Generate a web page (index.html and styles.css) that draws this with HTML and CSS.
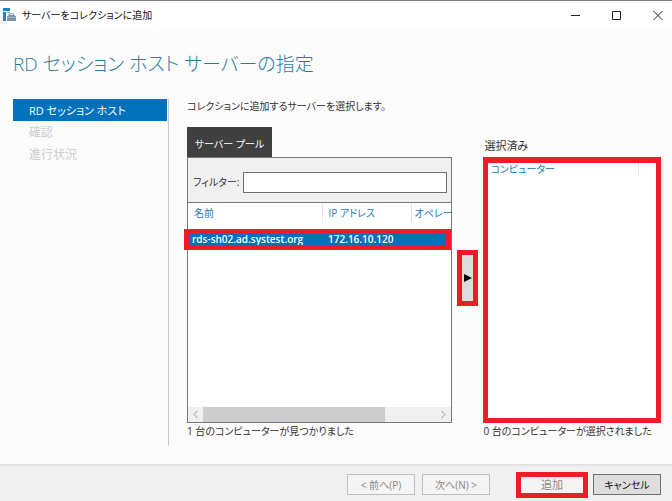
FILE: index.html
```html
<!DOCTYPE html>
<html lang="ja">
<head>
<meta charset="utf-8">
<meta name="viewport" content="width=device-width, initial-scale=1">
<title>サーバーをコレクションに追加</title>
<link rel="stylesheet" href="styles.css">
</head>
<body>
<div class="window">
  <header class="titlebar">
    <svg class="app-icon" viewBox="0 0 13 13" aria-hidden="true">
      <path d="M0 0h7v3H0zM0 4h3v9H0z" fill="#1583d0"/>
      <path d="M4 4h3v1H4z" fill="#7cbde8"/>
      <path d="M6 7.500Q6 5.500 8.500 5.500T11 7.500" fill="none" stroke="#7893a5"/>
      <path d="M4 8.500L6 7h5l2 1.500V13H4z" fill="#7893a5"/>
      <path d="M4 9.500h9" stroke="#c7d6df" stroke-width=".5"/>
    </svg>
    <span class="caption">サーバーをコレクションに追加</span>
    <div class="controls">
      <button class="control" type="button" aria-label="最小化"><svg viewBox="0 0 10 10"><path d="M0 5.500h9"/></svg></button>
      <button class="control" type="button" aria-label="最大化"><svg viewBox="0 0 10 10"><path d="M.5 1.500h8v8h-8z"/></svg></button>
      <button class="control" type="button" aria-label="閉じる"><svg viewBox="0 0 10 10"><path d="M.5 1l9 9M9.500 1l-9 9"/></svg></button>
    </div>
  </header>
  <h1 class="heading">RD セッション ホスト サーバーの指定</h1>
  <div class="content">
    <nav class="steps">
      <a class="step active" href="#host">RD セッション ホスト</a>
      <a class="step">確認</a>
      <a class="step">進行状況</a>
    </nav>
    <main class="page" id="host">
      <p class="instruction">コレクションに追加するサーバーを選択します。</p>
      <div class="picker">
        <section class="pool">
          <button class="tab" type="button">サーバー プール</button>
          <div class="panel">
            <div class="filter">
              <label for="filter">フィルター:</label>
              <input id="filter" type="text">
            </div>
            <div class="list">
              <table class="servers">
                <thead><tr><th class="name">名前</th><th class="ip">IP アドレス</th><th>オペレー</th></tr></thead>
                <tbody><tr><td>rds-sh02.ad.systest.org</td><td>172.16.10.120</td><td></td></tr></tbody>
              </table>
              <div class="row-mark"></div>
            </div>
            <div class="scrollbar">
              <svg viewBox="0 0 15 15"><path d="M9.500 4L6 7.500 9.500 11"/></svg>
              <div class="track"><div class="thumb"></div></div>
              <svg viewBox="0 0 15 15"><path d="M5.500 4L9 7.500 5.500 11"/></svg>
            </div>
          </div>
          <p class="status">1 台のコンピューターが見つかりました</p>
        </section>
        <div class="mover">
          <button class="move" type="button" aria-label="選択したサーバーを追加"><svg viewBox="0 0 8 8"><path d="M0 0l8 4-8 4z"/></svg></button>
        </div>
        <section class="chosen">
          <h2 class="chosen-title">選択済み</h2>
          <div class="chosen-list">
            <table class="computers"><thead><tr><th class="computer">コンピューター</th><th></th></tr></thead></table>
          </div>
          <p class="status">0 台のコンピューターが選択されました</p>
        </section>
      </div>
    </main>
  </div>
  <footer class="actions">
    <button class="btn" type="button" disabled>&lt; 前へ(P)</button>
    <button class="btn" type="button" disabled>次へ(N) &gt;</button>
    <div class="mark"><button class="btn add" type="button" disabled>追加</button></div>
    <button class="btn cancel" type="button">キャンセル</button>
  </footer>
</div>
</body>
</html>
```

FILE: styles.css
```css
* { box-sizing: border-box; }

body {
  margin: 0;
  background: #fcfcfc;
  color: #333;
  font: 10px/16px "Open Sans", "Noto Sans CJK JP", sans-serif;
  font-feature-settings: "palt";
}

button, input {
  margin: 0;
  padding: 0;
  font: inherit;
  font-feature-settings: inherit;
  border-radius: 0;
}

h1, h2, p { margin: 0; font-weight: 400; white-space: nowrap; }

.window {
  display: flex;
  flex-direction: column;
  min-height: 100vh;
  border-top: 1px solid #808080;
}

.titlebar {
  display: flex;
  align-items: center;
  height: 27px;
  padding-left: 3px;
  background: #fff;
  color: #111;
}

.app-icon { width: 13px; height: 13px; }
.caption { margin-left: 6px; white-space: nowrap; }
.controls { display: flex; margin-left: auto; height: 100%; }

.control {
  display: flex;
  align-items: center;
  justify-content: center;
  width: 41px;
  border: 0;
  background: none;
}

.control:last-child { width: 29px; }
.control:nth-child(2) { margin-right: 6px; }
.control svg { width: 10px; height: 10px; fill: none; stroke: #222; overflow: visible; }

.heading {
  height: 71px;
  padding: 19px 13px 0;
  color: #2b7d9f;
  font-size: 19px;
  line-height: 34px;
  font-weight: 300;
}

.content { display: flex; flex: 1; padding-right: 11px; }

.steps {
  flex: 0 0 156px;
  margin: 0 0 18px 13px;
  border-right: 1px solid #c8c8c8;
}

.step {
  display: block;
  height: 22px;
  margin-right: 1px;
  padding-left: 16px;
  color: #ccc;
  font-size: 12px;
  line-height: 24px;
  text-decoration: none;
}

.step.active { background: #0072bc; color: #fff; font-size: 11px; }

.page {
  display: flex;
  flex-direction: column;
  flex: 1;
  min-width: 0;
  padding: 0 0 24px 18px;
}

.instruction { height: 28px; line-height: 14px; }
.picker { display: flex; flex: 1; }
.pool, .chosen { display: flex; flex-direction: column; }
.pool { flex: 3 1 266px; min-width: 0; }

.tab {
  align-self: flex-start;
  width: 85px;
  height: 30px;
  border: 0;
  background: #404040;
  color: #fff;
  line-height: 34px;
}

.panel {
  display: flex;
  flex-direction: column;
  flex: 1;
  border: 1px solid #777;
  background: #fff;
}

.filter {
  display: flex;
  align-items: center;
  gap: 4px;
  height: 45px;
  padding: 4px 4px 0 5px;
  border-bottom: 1px solid #777;
  background: #f0f0f0;
}

.filter label { white-space: nowrap; }

.filter input {
  flex: 1;
  min-width: 0;
  height: 21px;
  border: 1px solid #707070;
  background: #fff;
}

.list { position: relative; flex: 1; }

table { width: 100%; border-collapse: collapse; table-layout: fixed; }

th {
  height: 19px;
  padding: 0 0 0 6px;
  border-right: 1px solid #e5e5e5;
  color: #1b78bd;
  font-weight: 400;
  text-align: left;
  white-space: nowrap;
}

th:last-child { border-right: 0; }
.name { width: 134px; }
.ip { width: 89px; }
.servers th { height: 20px; }
.servers th:last-child { padding-left: 3px; }
.servers tbody::before { content: ""; display: block; height: 8px; }

td {
  height: 16px;
  padding: 0 0 0 4px;
  background: #0072bc;
  color: #fff;
  font-weight: 600;
  line-height: 16px;
  white-space: nowrap;
}

td + td { padding-left: 6px; }

.row-mark {
  position: absolute;
  top: 26px;
  right: 0;
  left: -4px;
  height: 21px;
  border: 5px solid #ee1c25;
}

.scrollbar { display: flex; height: 15px; background: #f0f0f0; }
.scrollbar svg { width: 15px; height: 15px; fill: none; stroke: #999; }
.track { flex: 1; }
.thumb { width: 78%; height: 100%; background: #cdcdcd; }

.status { height: 17px; line-height: 17px; }

.mover { display: flex; align-items: flex-start; padding: 123px 5px 0; }

.move {
  display: flex;
  align-items: center;
  justify-content: center;
  width: 21px;
  height: 56px;
  border: 5px solid #ee1c25;
  background: #ddd;
}

.move svg { width: 8px; height: 8px; }

.chosen { flex: 2 1 178px; min-width: 0; }

.chosen-title {
  height: 30px;
  padding: 11px 0 0 1px;
  font-size: 11px;
  line-height: 16px;
}

.chosen-list {
  flex: 1;
  border: 5px solid #ee1c25;
  border-top-width: 6px;
  background: #fff;
}

.computers th { height: 12px; padding-left: 2px; line-height: 12px; }
.computer { width: 150px; }

.actions {
  display: flex;
  align-items: center;
  justify-content: flex-end;
  height: 37px;
  padding: 2px 11px 0 0;
  border-top: 2px solid #e4e4e4;
  background: #f0f0f0;
}

.btn {
  width: 68px;
  height: 21px;
  margin-right: 7px;
  border: 1px solid #bfbfbf;
  background: #f4f4f4;
  color: #888;
  line-height: 18px;
  white-space: nowrap;
}

.mark { margin: 0 5px 0 19px; border: 5px solid #ee1c25; }
.btn.add { display: block; width: 62px; height: 16px; margin: 0; border: 0; font-size: 11px; line-height: 16px; }
.btn.cancel { margin: 0; border-color: #707070; background: #ddd; color: #111; }
```
